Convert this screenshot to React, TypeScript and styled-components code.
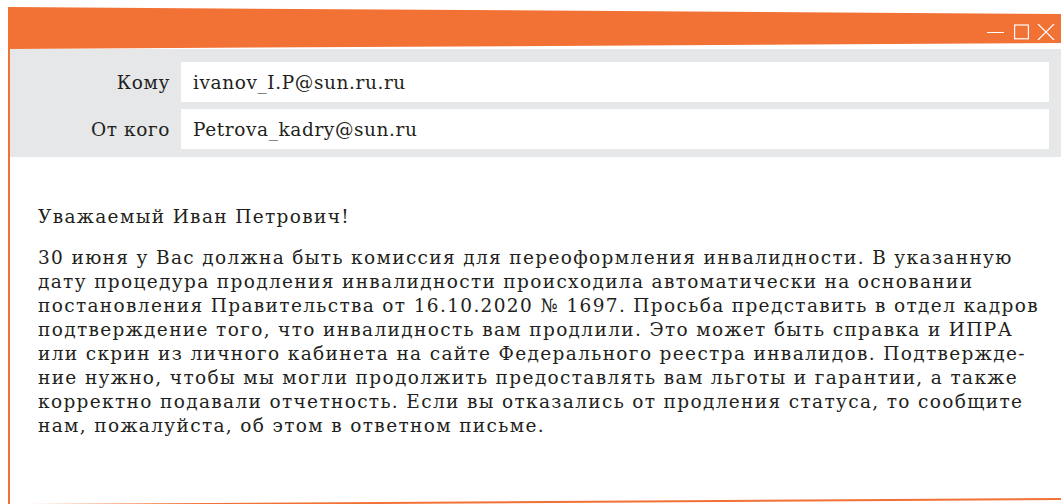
import React from "react";
import styled, { createGlobalStyle } from "styled-components";

const ORANGE = "#f27134";
const GRAY = "#e6e7e8";
const INK = "#231f20";

const Global = createGlobalStyle`
  html, body { margin: 0; padding: 0; background: #ffffff; }
  body { font-family: "DejaVu Serif", "Liberation Serif", serif; color: ${INK}; overflow: hidden; }
`;

const Page = styled.div`
  width: 1061px;
  height: 504px;
  position: relative;
  overflow: hidden;
  padding: 7px 0 0 8px;
  box-sizing: border-box;
`;

const Window = styled.div`
  display: flex;
  flex-direction: column;
  height: 100%;
  border-left: 2px solid ${ORANGE};
`;

const TitleBar = styled.div`
  height: 42px;
  margin-left: -2px;
  background: ${ORANGE};
  clip-path: polygon(0 0, 100% 7px, 100% 36px, 0 100%);
  display: flex;
  align-items: center;
  justify-content: flex-end;
  padding: 8px 6px 0 0;
  box-sizing: border-box;
`;

const WinButton = styled.svg<{ $w: number; $gap: number }>`
  width: ${(p) => p.$w}px;
  height: 16px;
  margin-left: ${(p) => p.$gap}px;
  display: block;
`;

const Header = styled.div`
  background: ${GRAY};
  padding: 13px 12px 8px 0;
  display: grid;
  grid-template-columns: 160px 1fr;
  column-gap: 11px;
  row-gap: 7px;
`;

const Label = styled.div`
  text-align: right;
  align-self: center;
  font-size: 18.5px;
  letter-spacing: 0.6px;
  font-weight: 300;
`;

const Field = styled.div`
  height: 40px;
  background: #ffffff;
  display: flex;
  align-items: center;
  padding-left: 12px;
  font-size: 18.5px;
  letter-spacing: 0.6px;
`;

const Body = styled.div`
  flex: 1;
  padding: 48px 0 0 28px;
  font-size: 18.5px;
  letter-spacing: 1.35px;
`;

const Greeting = styled.div`
  line-height: 24px;
  margin-bottom: 17px;
`;

const Line = styled.div`
  line-height: 24px;
  white-space: nowrap;
`;

const BottomEdge = styled.div`
  position: absolute;
  left: -10px;
  right: -10px;
  bottom: 4px;
  height: 2px;
  background: ${ORANGE};
  transform: rotate(-0.33deg);
  transform-origin: right center;
`;

const lines = [
  "30 июня у Вас должна быть комиссия для переоформления инвалидности. В указанную",
  "дату процедура продления инвалидности происходила автоматически на основании",
  "постановления Правительства от 16.10.2020 № 1697. Просьба представить в отдел кадров",
  "подтверждение того, что инвалидность вам продлили. Это может быть справка и ИПРА",
  "или скрин из личного кабинета на сайте Федерального реестра инвалидов. Подтвержде-",
  "ние нужно, чтобы мы могли продолжить предоставлять вам льготы и гарантии, а также",
  "корректно подавали отчетность. Если вы отказались от продления статуса, то сообщите",
  "нам, пожалуйста, об этом в ответном письме.",
];

export default function App() {
  return (
    <>
      <Global />
      <Page>
        <Window>
          <TitleBar>
            <WinButton viewBox="0 0 17 16" $w={17} $gap={0}>
              <line x1="0" y1="8.5" x2="17" y2="8.5" stroke="#fff" strokeWidth="1.2" />
            </WinButton>
            <WinButton viewBox="0 0 15 16" $w={15} $gap={10}>
              <rect x="0.6" y="1" width="13.8" height="13.8" fill="none" stroke="#fff" strokeWidth="1.2" />
            </WinButton>
            <WinButton viewBox="0 0 18 16" $w={18} $gap={8}>
              <path d="M1 0 L17 16 M17 0 L1 16" stroke="#fff" strokeWidth="1.2" />
            </WinButton>
          </TitleBar>
          <Header>
            <Label>Кому</Label>
            <Field>ivanov_I.P@sun.ru.ru</Field>
            <Label>От кого</Label>
            <Field>Petrova_kadry@sun.ru</Field>
          </Header>
          <Body>
            <Greeting>Уважаемый Иван Петрович!</Greeting>
            {lines.map((l) => (
              <Line key={l}>{l}</Line>
            ))}
          </Body>
        </Window>
        <BottomEdge />
      </Page>
    </>
  );
}
